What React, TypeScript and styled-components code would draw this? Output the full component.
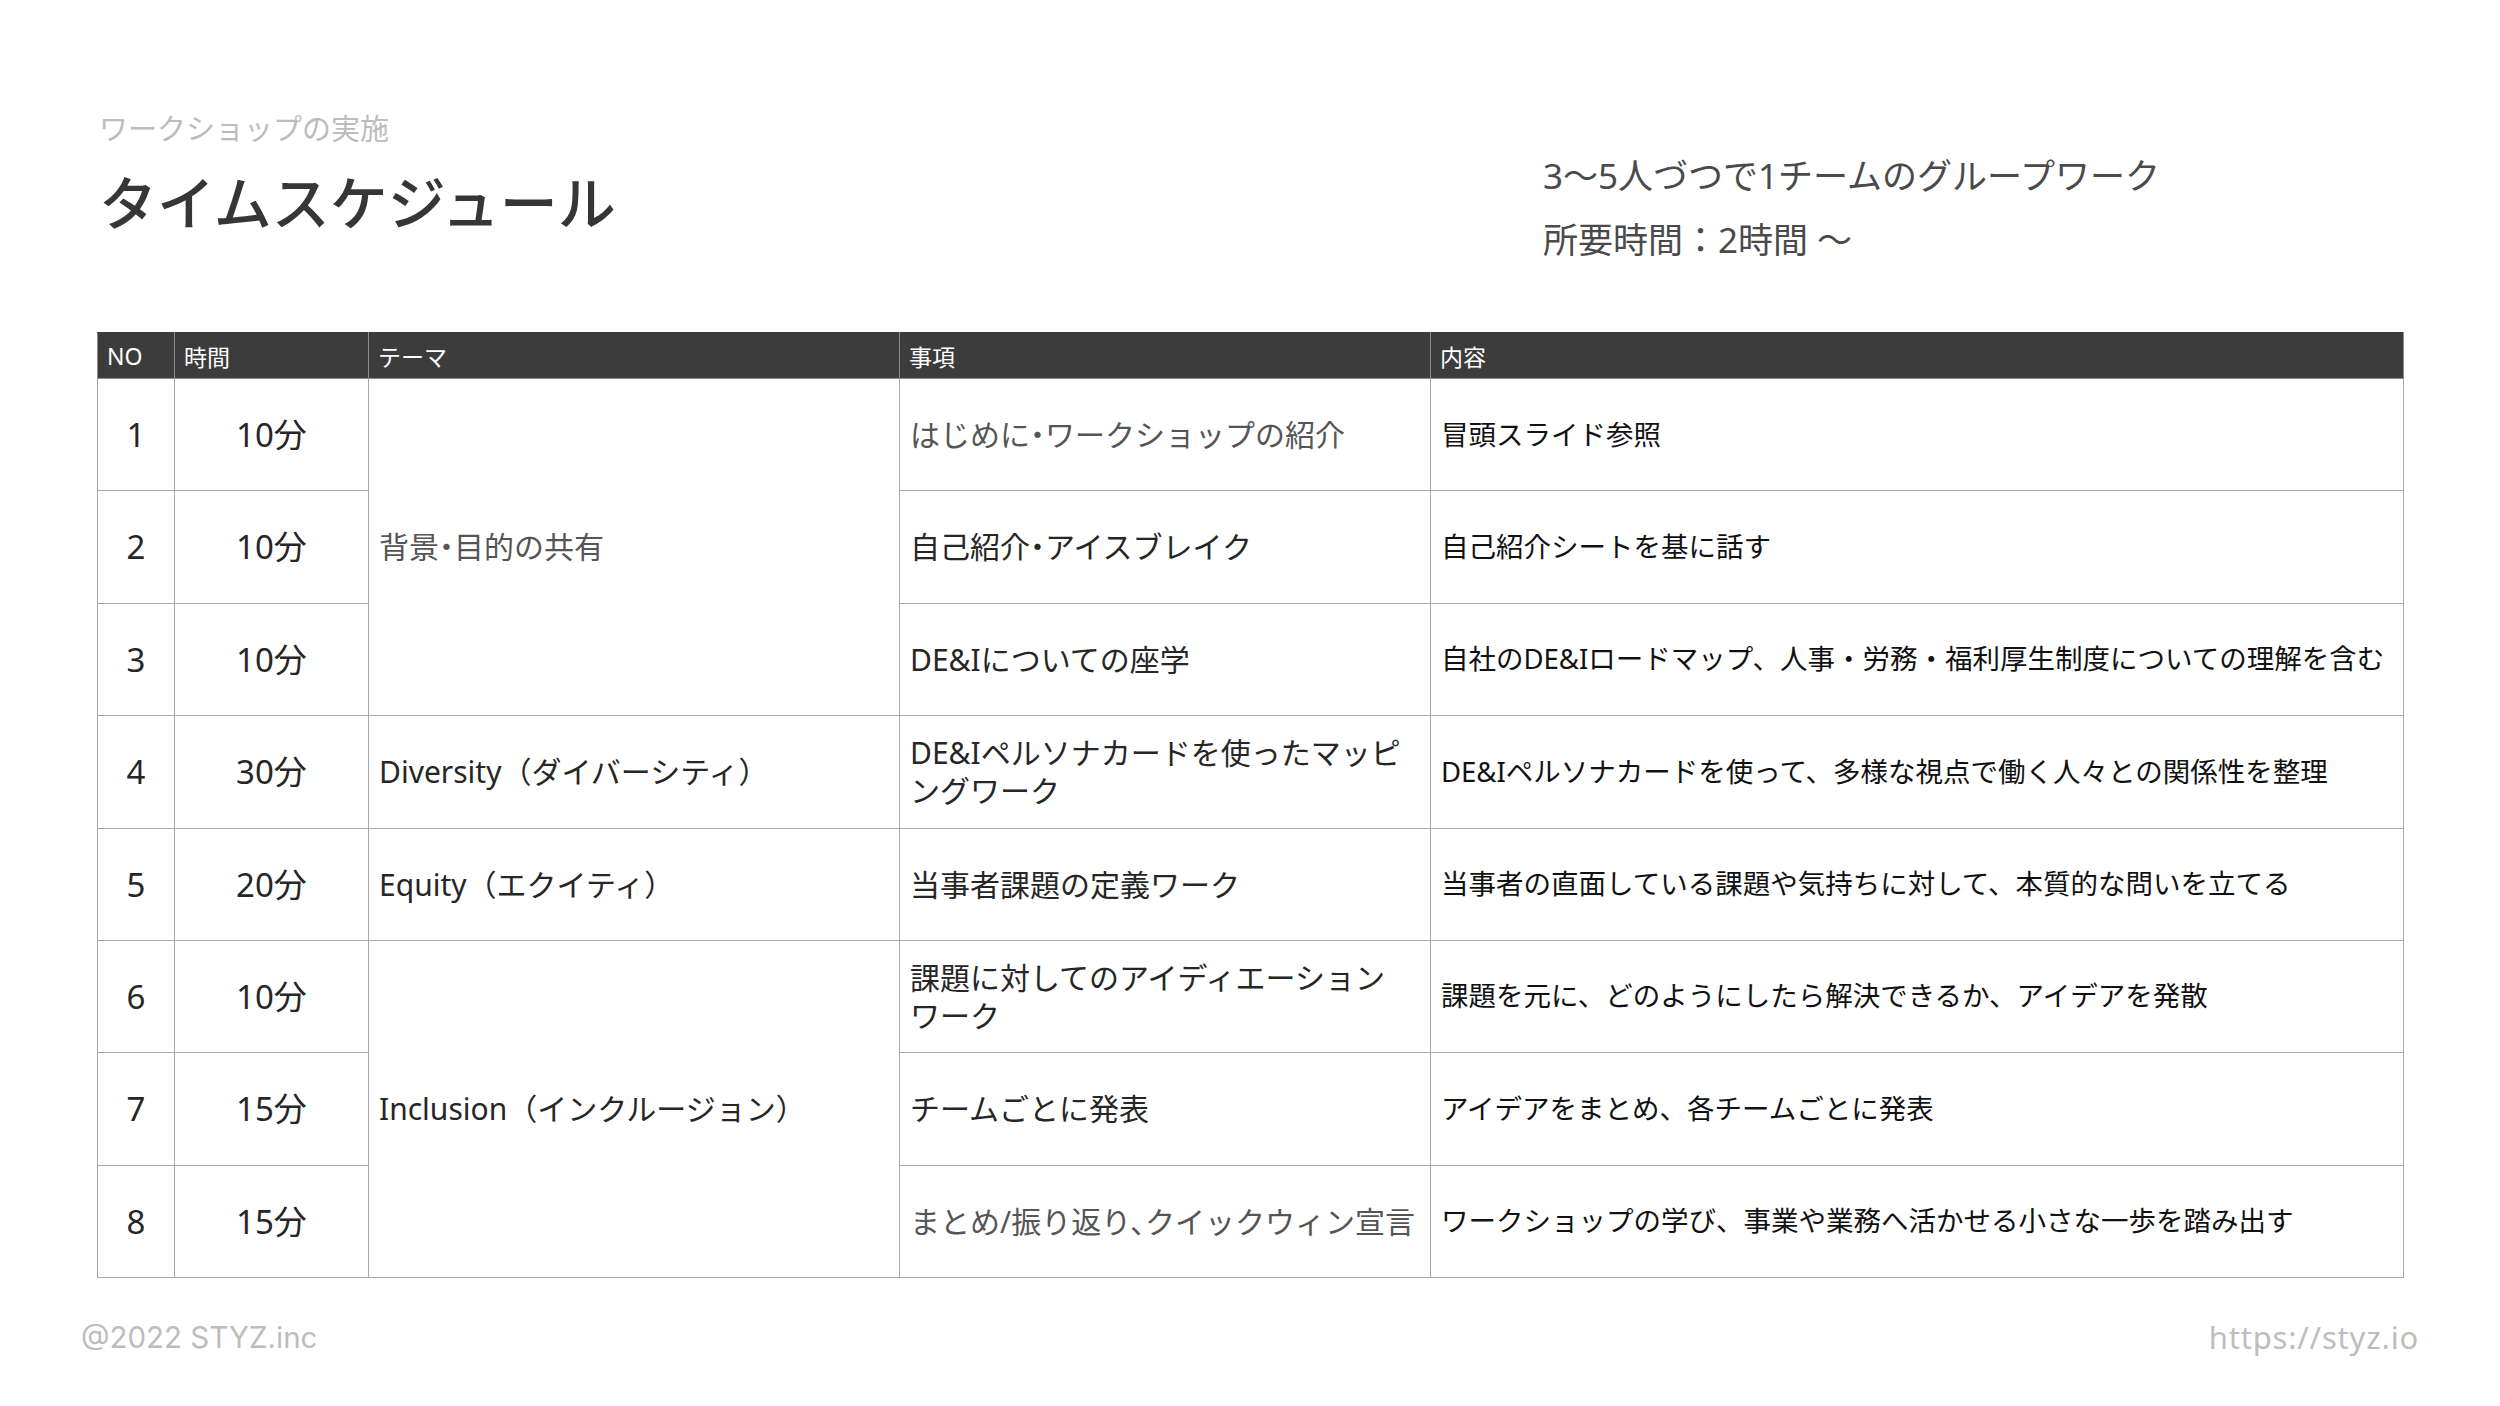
import React from "react";
import styled, { createGlobalStyle } from "styled-components";

const GlobalStyle = createGlobalStyle`
  html, body {
    margin: 0;
    padding: 0;
    background: #ffffff;
  }
  body {
    font-family: "Noto Sans", "Noto Sans CJK JP", sans-serif;
    color: #222;
  }
`;

const Page = styled.div`
  width: 2500px;
  height: 1406px;
  box-sizing: border-box;
  padding: 107px 0 0 0;
  display: flex;
  flex-direction: column;
  background: #fff;
  overflow: hidden;
`;

const Header = styled.header`
  display: grid;
  grid-template-columns: 1446px 1fr;
  padding-left: 97px;
  height: 225px;
  box-sizing: border-box;
`;

const TitleBlock = styled.div`
  display: flex;
  flex-direction: column;
  gap: 18px;
  padding-left: 2px;
`;

const Eyebrow = styled.div`
  font-family: "Noto Sans CJK JP", sans-serif;
  font-size: 29px;
  line-height: 40px;
  color: #bcbcbc;
`;

const Title = styled.h1`
  margin: 0;
  font-family: "Noto Sans CJK JP", sans-serif;
  font-size: 58px;
  line-height: 70px;
  font-weight: 500;
  color: #363636;
`;

const Notes = styled.div`
  margin-top: 37px;
  display: flex;
  flex-direction: column;
`;

const Note = styled.div`
  font-size: 35px;
  line-height: 64px;
  color: #4a4a4a;
  white-space: nowrap;
`;

const TableWrap = styled.div`
  padding-left: 97px;
`;

const Table = styled.table`
  width: 2306px;
  table-layout: fixed;
  border-collapse: collapse;
`;

const HeadRow = styled.tr`
  height: 46px;
`;

const HeadCell = styled.th`
  background: #3c3c3c;
  color: #ffffff;
  font-size: 23px;
  font-weight: 400;
  text-align: left;
  padding: 0 0 0 9px;
  border: 1px solid #8c8c8c;
  border-top-color: #3c3c3c;
  vertical-align: middle;
`;

const BodyRow = styled.tr`
  height: 112.4px;
`;

const Cell = styled.td<{
  $size: number;
  $align?: "left" | "center";
  $tone?: "dark" | "muted" | "black";
  $halfPunct?: boolean;
}>`
  border: 1px solid #a8a8a8;
  padding: 0 10px;
  font-size: ${(p) => p.$size}px;
  line-height: 1.25;
  text-align: ${(p) => p.$align ?? "left"};
  vertical-align: middle;
  color: ${(p) => (p.$tone === "muted" ? "#555555" : p.$tone === "black" ? "#111111" : "#262626")};
  font-feature-settings: ${(p) => (p.$halfPunct ? '"halt"' : "normal")};
  white-space: nowrap;
  overflow: hidden;
`;

const Footer = styled.footer`
  margin-top: 39px;
  display: flex;
  justify-content: space-between;
  align-items: center;
  padding: 0 81px;
`;

const Copyright = styled.div`
  font-family: Inter, "Noto Sans", sans-serif;
  font-size: 29.5px;
  line-height: 40px;
  color: #bdbdbd;
`;

const Url = styled.div`
  font-family: "Noto Sans", Inter, sans-serif;
  font-size: 31px;
  letter-spacing: 0.8px;
  line-height: 40px;
  color: #bdbdbd;
`;

type Row = {
  no: number;
  time: string;
  theme?: { text: string; span: number; muted?: boolean; halfPunct?: boolean };
  item: string[];
  itemMuted?: boolean;
  content: string;
};

const rows: Row[] = [
  {
    no: 1,
    time: "10分",
    theme: { text: "背景・目的の共有", span: 3, muted: true, halfPunct: true },
    item: ["はじめに・ワークショップの紹介"],
    itemMuted: true,
    content: "冒頭スライド参照",
  },
  { no: 2, time: "10分", item: ["自己紹介・アイスブレイク"], content: "自己紹介シートを基に話す" },
  {
    no: 3,
    time: "10分",
    item: ["DE&Iについての座学"],
    content: "自社のDE&Iロードマップ、人事・労務・福利厚生制度についての理解を含む",
  },
  {
    no: 4,
    time: "30分",
    theme: { text: "Diversity（ダイバーシティ）", span: 1 },
    item: ["DE&Iペルソナカードを使ったマッピ", "ングワーク"],
    content: "DE&Iペルソナカードを使って、多様な視点で働く人々との関係性を整理",
  },
  {
    no: 5,
    time: "20分",
    theme: { text: "Equity（エクイティ）", span: 1 },
    item: ["当事者課題の定義ワーク"],
    content: "当事者の直面している課題や気持ちに対して、本質的な問いを立てる",
  },
  {
    no: 6,
    time: "10分",
    theme: { text: "Inclusion（インクルージョン）", span: 3 },
    item: ["課題に対してのアイディエーション", "ワーク"],
    content: "課題を元に、どのようにしたら解決できるか、アイデアを発散",
  },
  { no: 7, time: "15分", item: ["チームごとに発表"], content: "アイデアをまとめ、各チームごとに発表" },
  {
    no: 8,
    time: "15分",
    item: ["まとめ/振り返り、クイックウィン宣言"],
    itemMuted: true,
    content: "ワークショップの学び、事業や業務へ活かせる小さな一歩を踏み出す",
  },
];

export default function App() {
  return (
    <>
      <GlobalStyle />
      <Page>
        <Header>
          <TitleBlock>
            <Eyebrow>ワークショップの実施</Eyebrow>
            <Title>タイムスケジュール</Title>
          </TitleBlock>
          <Notes>
            <Note>3〜5人づつで1チームのグループワーク</Note>
            <Note>所要時間：2時間 〜</Note>
          </Notes>
        </Header>
        <TableWrap>
          <Table>
            <colgroup>
              <col style={{ width: 77 }} />
              <col style={{ width: 194 }} />
              <col style={{ width: 531 }} />
              <col style={{ width: 531 }} />
              <col style={{ width: 973 }} />
            </colgroup>
            <thead>
              <HeadRow>
                <HeadCell>NO</HeadCell>
                <HeadCell>時間</HeadCell>
                <HeadCell>テーマ</HeadCell>
                <HeadCell>事項</HeadCell>
                <HeadCell>内容</HeadCell>
              </HeadRow>
            </thead>
            <tbody>
              {rows.map((r) => (
                <BodyRow key={r.no}>
                  <Cell $size={33} $align="center">
                    {r.no}
                  </Cell>
                  <Cell $size={33} $align="center">
                    {r.time}
                  </Cell>
                  {r.theme && (
                    <Cell
                      $size={30}
                      rowSpan={r.theme.span}
                      $tone={r.theme.muted ? "muted" : "dark"}
                      $halfPunct={r.theme.halfPunct}
                    >
                      {r.theme.text}
                    </Cell>
                  )}
                  <Cell $size={30} $tone={r.itemMuted ? "muted" : "dark"} $halfPunct>
                    {r.item.map((line, i) => (
                      <React.Fragment key={i}>
                        {i > 0 && <br />}
                        {line}
                      </React.Fragment>
                    ))}
                  </Cell>
                  <Cell $size={27.5} $tone="black">
                    {r.content}
                  </Cell>
                </BodyRow>
              ))}
            </tbody>
          </Table>
        </TableWrap>
        <Footer>
          <Copyright>@2022 STYZ.inc</Copyright>
          <Url>https://styz.io</Url>
        </Footer>
      </Page>
    </>
  );
}
